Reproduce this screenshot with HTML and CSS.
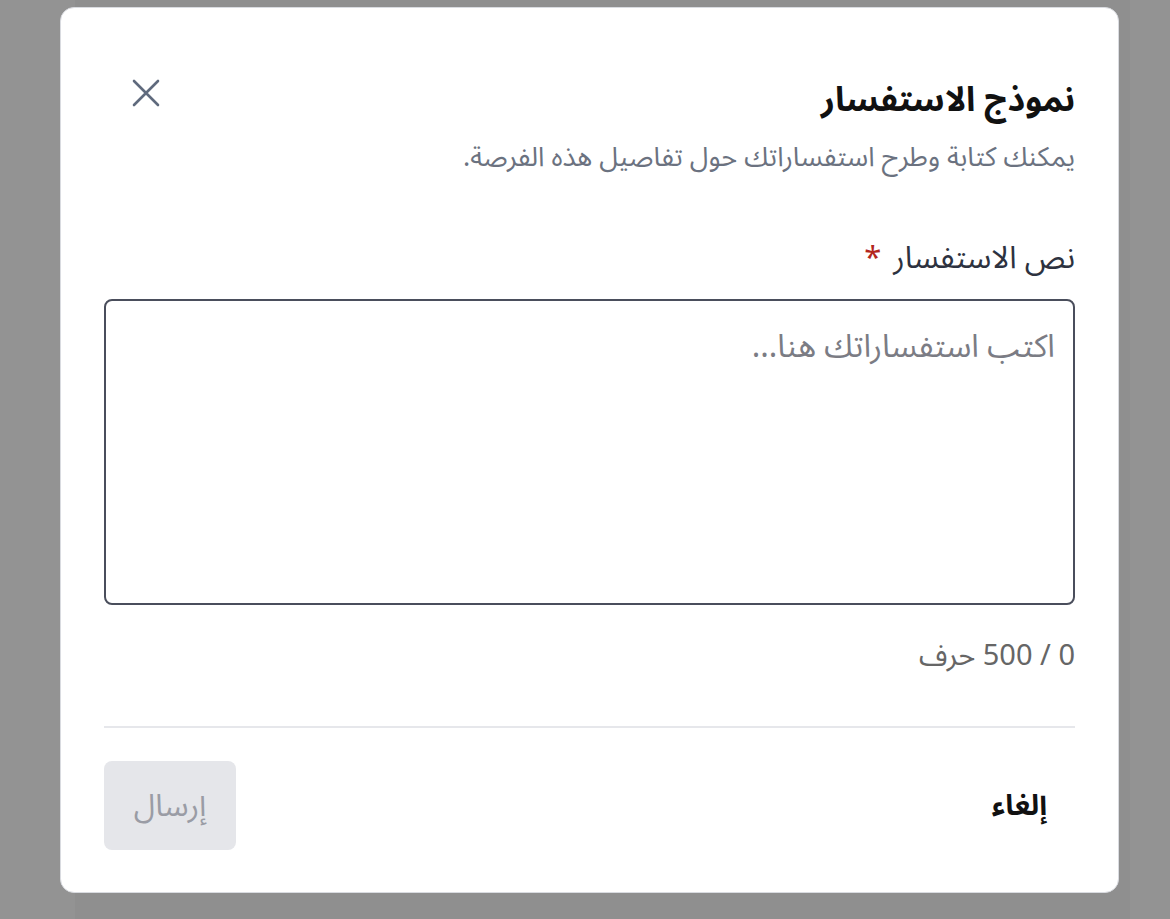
FILE: index.html
```html
<!DOCTYPE html>
<html lang="ar" dir="rtl">
<head>
<meta charset="utf-8">
<link rel="stylesheet" href="styles.css">
</head>
<body>
<div class="backdrop">
  <div class="behind"></div>
  <div class="dialog">
    <div class="header">
      <div class="titles">
        <h1 class="title">نموذج الاستفسار</h1>
        <p class="subtitle">يمكنك كتابة وطرح استفساراتك حول تفاصيل هذه الفرصة.</p>
      </div>
      <button class="close" aria-label="إغلاق">
        <svg width="30" height="30" viewBox="0 0 30 30" fill="none" stroke="#5f6a7d" stroke-width="2.6" stroke-linecap="round">
          <path d="M3 3 L27 27 M27 3 L3 27"/>
        </svg>
      </button>
    </div>
    <div class="field">
      <label class="label">نص الاستفسار <span class="req">*</span></label>
      <div class="textarea"><span class="placeholder">اكتب استفساراتك هنا...</span></div>
      <div class="counter">0 / 500 حرف</div>
    </div>
    <div class="divider"></div>
    <div class="footer">
      <button class="btn cancel">إلغاء</button>
      <button class="btn submit">إرسال</button>
    </div>
  </div>
</div>
</body>
</html>
```
FILE: styles.css
```css
* { box-sizing: border-box; }
html, body { margin: 0; padding: 0; }
body {
  width: 1170px;
  height: 919px;
  overflow: hidden;
  background: #939393;
  font-family: "Noto Sans Arabic", "Noto Sans", "DejaVu Sans", sans-serif;
}
.backdrop {
  position: relative;
  width: 1170px;
  height: 919px;
  padding: 7px 51px 0 60px;
}
.behind {
  position: absolute;
  left: 75px;
  right: 40px;
  top: 0;
  bottom: 0;
  background: #8f8f8f;
}
.dialog {
  position: relative;
  width: 1059px;
  height: 886px;
  background: #fff;
  border: 1px solid #d9dbe0;
  border-radius: 14px;
  padding: 0 43px;
  display: flex;
  flex-direction: column;
}
.header {
  display: flex;
  justify-content: space-between;
  align-items: flex-start;
  padding-top: 70px;
}
.title {
  margin: 0;
  font-size: 34px;
  font-weight: 700;
  color: #111;
  line-height: 44px;
}
.subtitle {
  margin: 19px 0 0;
  font-size: 27px;
  color: #6b7280;
  line-height: 34px;
}
.close {
  background: none;
  border: 0;
  padding: 0;
  margin: 0 0 0 27px;
  width: 30px;
  height: 30px;
  cursor: pointer;
}
.field {
  margin-top: 64px;
  display: flex;
  flex-direction: column;
}
.label {
  font-size: 31px;
  color: #2d3240;
  line-height: 38px;
}
.req { color: #b3261e; margin-right: 4px; }
.textarea {
  margin-top: 22px;
  height: 306px;
  border: 2px solid #4a4e5c;
  border-radius: 8px;
  padding: 27px 18px;
}
.placeholder {
  font-size: 32px;
  color: #7b7c84;
  line-height: 38px;
}
.counter {
  margin-top: 33px;
  font-size: 29px;
  color: #666;
  line-height: 36px;
}
.divider {
  margin-top: 52px;
  height: 2px;
  background: #e6e7eb;
}
.footer {
  margin-top: 33px;
  display: flex;
  justify-content: space-between;
}
.btn {
  font-family: inherit;
  border: 0;
  border-radius: 8px;
  height: 89px;
  font-size: 29px;
  cursor: pointer;
}
.cancel {
  background: transparent;
  color: #111;
  font-weight: 700;
  padding: 0 28px;
}
.submit {
  width: 132px;
  font-size: 31px;
  background: #e5e6ea;
  color: #9a9ca5;
}
```
